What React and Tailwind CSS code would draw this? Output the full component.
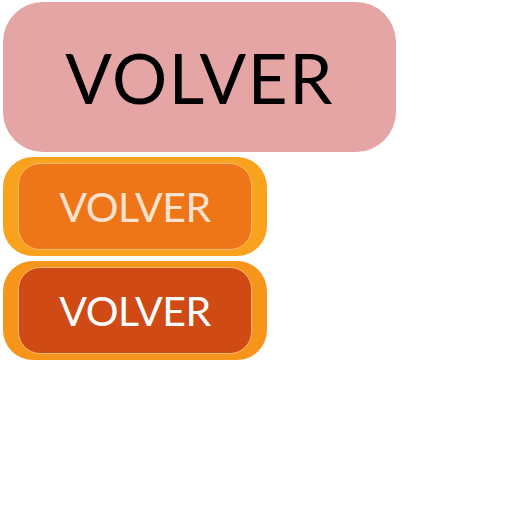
import React from "react";

const OrangeButton = ({ outer, inner, text }) => (
  <div className={`w-[264px] h-[99px] rounded-[30px] ${outer} px-[15px] py-[6px]`}>
    <div
      className={`h-full rounded-[22px] border-[1.5px] border-[#fbb96e] ${inner} flex items-center justify-center`}
    >
      <span
        className="text-[41px] leading-none tracking-[-0.5px]"
        style={{ fontFamily: "Lato, 'Open Sans', sans-serif" }}
      >
        {text}
      </span>
    </div>
  </div>
);

export default function App() {
  return (
    <div className="w-[512px] h-[512px] bg-white pt-[2px] pl-[3px] flex flex-col">
      <div className="w-[393px] h-[150px] rounded-[40px] bg-[#e5a5a5] flex items-center justify-center">
        <span
          className="text-[69px] leading-none text-black tracking-[1.5px]"
          style={{ fontFamily: "Lato, 'Liberation Sans', sans-serif" }}
        >
          VOLVER
        </span>
      </div>
      <div className="mt-[5px] flex flex-col gap-[5px]">
        <OrangeButton outer="bg-[#f8a21e]" inner="bg-[#ee7518] text-[#fde2cf]" text="VOLVER" />
        <OrangeButton outer="bg-[#f7951a]" inner="bg-[#d04a15] text-white" text="VOLVER" />
      </div>
    </div>
  );
}
